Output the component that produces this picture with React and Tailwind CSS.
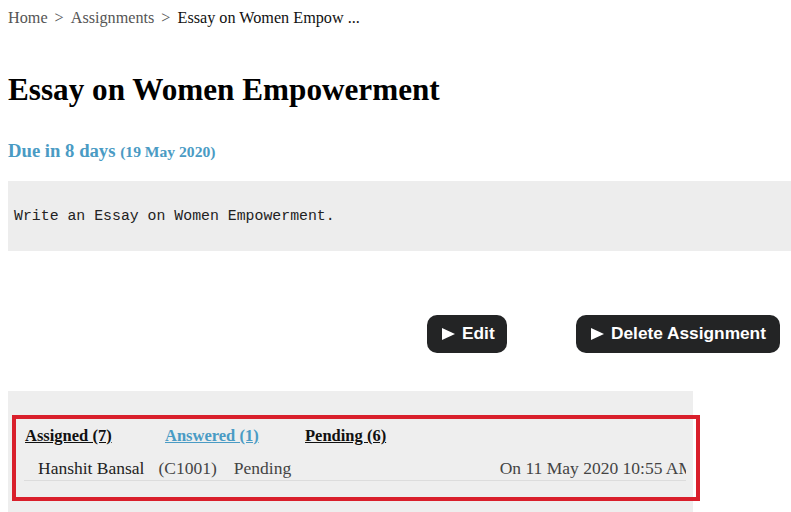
import React from "react";

const serif = { fontFamily: '"Liberation Serif", "Times New Roman", serif' };

function Tri() {
  return (
    <svg width="13" height="12" viewBox="0 0 13 12" className="shrink-0">
      <polygon points="0,0 13,6 0,12" fill="#ffffff" />
    </svg>
  );
}

export default function App() {
  return (
    <div className="w-[791px] h-[512px] overflow-hidden bg-white pl-2" style={serif}>
      <div className="pt-[9px] text-[16.2px] leading-[18px] text-[#555] flex items-baseline whitespace-nowrap">
        <span>Home</span>
        <span className="mx-[7px]">&gt;</span>
        <span>Assignments</span>
        <span className="mx-[7px]">&gt;</span>
        <span className="text-[#111]">Essay on Women Empow ...</span>
      </div>

      <h1 className="mt-[45px] text-[31.2px] leading-[36px] font-bold text-[#000]">
        Essay on Women Empowerment
      </h1>

      <div className="mt-[32px] text-[18.7px] leading-[22px] font-bold text-[#4a9bc4] whitespace-nowrap">
        Due in 8 days <span className="text-[15.6px]">(19 May 2020)</span>
      </div>

      <div className="mt-[18px] h-[70px] w-[783px] bg-[#ededed] flex items-center pl-[6px]">
        <span
          className="text-[14.85px] text-[#222] whitespace-pre"
          style={{ fontFamily: '"Liberation Mono", "DejaVu Sans Mono", monospace' }}
        >
          Write an Essay on Women Empowerment.
        </span>
      </div>

      <div
        className="mt-[64px] flex justify-end pr-[11px] gap-[69px]"
        style={{ fontFamily: '"Liberation Sans", Arial, sans-serif' }}
      >
        <div className="h-[38px] w-[80px] rounded-[10px] bg-[#232425] flex items-center pl-[15px] gap-[7px] text-white font-bold text-[17.3px]">
          <Tri />
          <span>Edit</span>
        </div>
        <div className="h-[38px] w-[204px] rounded-[10px] bg-[#232425] flex items-center pl-[15px] gap-[7px] text-white font-bold text-[17.3px] whitespace-nowrap">
          <Tri />
          <span>Delete Assignment</span>
        </div>
      </div>

      <div className="relative mt-[38px] w-[685px] h-[140px] bg-[#eeeeee] pt-[35px]">
        <div className="ml-[16px] w-[662px] overflow-hidden">
          <div className="pl-[1px] flex text-[16.5px] leading-[20px] font-bold whitespace-nowrap">
            <span className="w-[140px] underline text-[#111]">Assigned (7)</span>
            <span className="w-[140px] underline text-[#4a9bc4]">Answered (1)</span>
            <span className="w-[140px] underline text-[#111]">Pending (6)</span>
          </div>
          <div className="mt-[10px] h-[25px] border-b border-[#dcdcdc] flex justify-between whitespace-nowrap text-[17.5px] leading-[24px] text-[#222]">
            <div className="pl-[14px] flex">
              <span>Hanshit Bansal</span>
              <span className="ml-[14px] text-[#444]">(C1001)</span>
              <span className="ml-[17px] text-[#444]">Pending</span>
            </div>
            <span className="shrink-0 ml-auto text-[#444] translate-x-[8px]">On 11 May 2020 10:55 AM</span>
          </div>
        </div>
        <div className="absolute left-[4px] top-[24px] w-[688px] h-[86px] border-[4px] border-[#d91f2b]" />
      </div>
    </div>
  );
}
